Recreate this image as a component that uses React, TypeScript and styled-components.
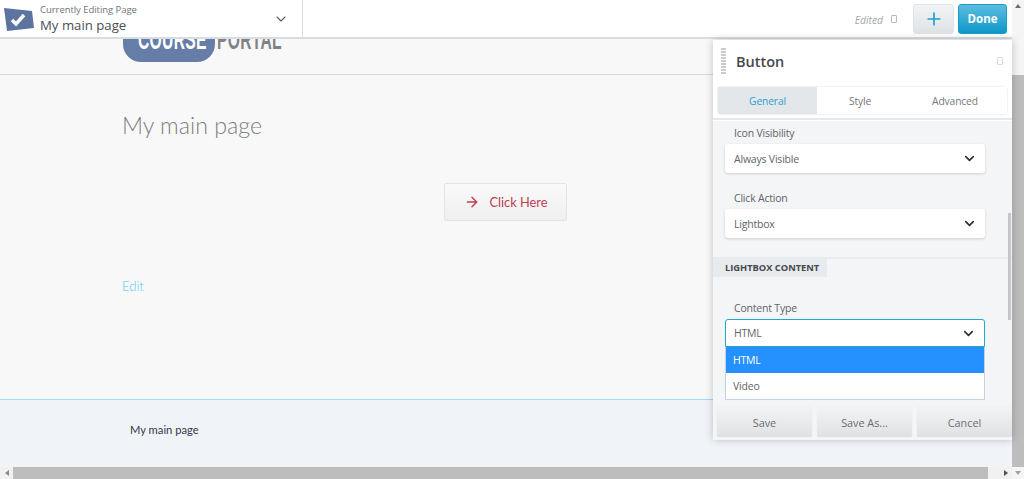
import styled, { createGlobalStyle } from 'styled-components'
import { ArrowRight, ChevronDown, Plus } from 'lucide-react'

const Global = createGlobalStyle`
  html, body {
    margin: 0;
    padding: 0;
    height: 100%;
    overflow: hidden;
    background: #f8f8f9;
  }
  * {
    box-sizing: border-box;
  }
`

const Page = styled.div`
  position: relative;
  display: flex;
  width: 1024px;
  height: 479px;
  overflow: hidden;
  font-family: 'Open Sans', 'Noto Sans', sans-serif;
`
const Main = styled.div`
  flex: 1;
  min-width: 0;
  display: flex;
  flex-direction: column;
`
const TopBar = styled.header`
  height: 39px;
  flex: none;
  display: flex;
  align-items: stretch;
  background: #fff;
  border-bottom: 2px solid #d8dde1;
`
const PagePicker = styled.div`
  width: 303px;
  display: flex;
  align-items: center;
  padding: 0 13px 0 4px;
  border-right: 1px solid #d8dde1;
`
const PageLogo = styled.svg`
  width: 31px;
  height: 27px;
  flex: none;
  margin: 1px 5px 0 0;
`
const PageText = styled.div`
  flex: 1;
  display: flex;
  flex-direction: column;
`
const PageCaption = styled.span`
  font-size: 9.5px;
  line-height: 13px;
  letter-spacing: -0.05px;
  color: #6d7479;
`
const PageName = styled.span`
  font-size: 13.2px;
  line-height: 19px;
  color: #4a4f54;
`
const Actions = styled.div`
  flex: 1;
  display: flex;
  align-items: center;
  justify-content: flex-end;
  padding: 0 5px 0 0;
`
const EditedText = styled.span`
  margin-top: 2px;
  font-size: 10.3px;
  font-style: italic;
  color: #a3a8ac;
`
const TinyBox = styled.span`
  display: block;
  width: 6px;
  height: 8px;
  border: 1px solid #b5babd;
  border-radius: 1px;
  margin: 0 16px 0 8px;
`
const AddButton = styled.button`
  width: 41px;
  height: 30px;
  padding: 0;
  display: flex;
  align-items: center;
  justify-content: center;
  margin-right: 4px;
  border: 1px solid #dfe3e6;
  border-radius: 3px;
  background: linear-gradient(#f2f4f5, #dfe3e6);
  color: #1f9fd0;
`
const DoneButton = styled.button`
  width: 49px;
  height: 30px;
  padding: 0;
  border: 1px solid #1a9ccb;
  border-radius: 3px;
  background: linear-gradient(#5cbde0, #0f97c9);
  color: #fff;
  font-family: 'Open Sans', sans-serif;
  font-size: 11.5px;
  font-weight: 700;
`
const LogoStrip = styled.div`
  height: 36px;
  flex: none;
  display: flex;
  padding-left: 123px;
  overflow: hidden;
  border-bottom: 1px solid #d5d7d9;
`
const LogoPill = styled.div`
  width: 92px;
  height: 62px;
  flex: none;
  margin-top: -39px;
  padding: 0 0 7px 15px;
  display: flex;
  align-items: flex-end;
  background: #667da8;
  border-radius: 0 0 18px 18px;
`
const LogoWord = styled.span<{ $tone: string }>`
  display: block;
  width: 66px;
  font-family: 'Liberation Sans', sans-serif;
  font-size: 27px;
  line-height: 30px;
  font-weight: 700;
  letter-spacing: 0.5px;
  color: ${(p) => p.$tone};
  white-space: nowrap;
  transform: scaleX(0.58);
  transform-origin: left center;
`
const PortalWord = styled.div`
  height: 62px;
  flex: none;
  margin: -39px 0 0 2px;
  padding-bottom: 7px;
  display: flex;
  align-items: flex-end;
`
const Content = styled.main`
  flex: 1;
  padding: 35px 0 0 122px;
  display: flex;
  flex-direction: column;
  background: #f8f8f9;
`
const Title = styled.h1`
  margin: 0;
  font-family: Lato, sans-serif;
  font-size: 23.2px;
  line-height: 30px;
  font-weight: 300;
  color: #7d7f82;
`
const ButtonRow = styled.div`
  display: flex;
  margin: 43px 0 0 322px;
`
const ClickButton = styled.button`
  width: 123px;
  height: 38px;
  padding: 0 0 0 1px;
  display: flex;
  align-items: center;
  justify-content: center;
  gap: 9px;
  border: 1px solid #e4e4e5;
  border-radius: 2px;
  background: linear-gradient(#fafafa, #efefef);
  color: #bd3d50;
  font-family: Lato, sans-serif;
  font-size: 12.8px;
`
const EditLink = styled.a`
  margin-top: 57px;
  font-family: Lato, sans-serif;
  font-size: 13px;
  line-height: 17px;
  font-weight: 300;
  color: #57c8f2;
`
const Footer = styled.footer`
  height: 68px;
  flex: none;
  padding: 22px 0 0 130px;
  background: #f0f3f7;
  border-top: 1px solid #9fdcf5;
  font-family: Lato, sans-serif;
  font-size: 11.2px;
  line-height: 16px;
  color: #33384a;
`
const HScroll = styled.div`
  height: 12px;
  flex: none;
  display: flex;
  align-items: center;
  background: #f1f1f1;
`
const HThumb = styled.div`
  height: 12px;
  flex: 1;
  background: #bdbdbd;
`
const ArrowSlot = styled.div`
  width: 13px;
  height: 12px;
  flex: none;
  display: flex;
  align-items: center;
  justify-content: center;
`
const TrackGap = styled.div`
  width: 11px;
  flex: none;
`
const Triangle = styled.span<{ $dir: 'up' | 'down' | 'left' | 'right' }>`
  display: block;
  width: 0;
  height: 0;
  border: 3px solid transparent;
  ${(p) => (p.$dir === 'up' ? 'border-top-width: 0; border-bottom: 4px solid #6e6e6e;' : '')}
  ${(p) => (p.$dir === 'down' ? 'border-bottom-width: 0; border-top: 4px solid #a0a0a0;' : '')}
  ${(p) => (p.$dir === 'left' ? 'border-left-width: 0; border-right: 4px solid #8a8a8a;' : '')}
  ${(p) => (p.$dir === 'right' ? 'border-right-width: 0; border-left: 4px solid #505050;' : '')}
`
const VScroll = styled.div`
  width: 12px;
  flex: none;
  display: flex;
  flex-direction: column;
  background: #f5f5f5;
`
const VThumb = styled.div`
  margin-top: 63px;
  flex: 1;
  background: #bdbdbd;
`
const VEnd = styled.div`
  height: 12px;
  flex: none;
  display: flex;
  align-items: center;
  justify-content: center;
`

/* floating settings panel */
const Panel = styled.aside`
  position: absolute;
  left: 713px;
  top: 40px;
  width: 299px;
  height: 400px;
  display: flex;
  flex-direction: column;
  background: #f3f5f7;
  box-shadow: 0 0 8px rgba(0, 0, 0, 0.22);
  border-radius: 3px 0 0 3px;
`
const PanelHead = styled.div`
  flex: none;
  height: 80px;
  padding: 0 5px;
  background: #fff;
  border-bottom: 2px solid #e6e9eb;
`
const PanelTitleRow = styled.div`
  height: 47px;
  display: flex;
  align-items: center;
`
const DragHandle = styled.span`
  width: 5px;
  height: 26px;
  margin: -5px 10px 0 3px;
  background: repeating-linear-gradient(#c9cdd0 0 2px, #fff 2px 3px);
`
const PanelTitle = styled.h2`
  flex: 1;
  margin: -5px 0 0;
  font-size: 14.5px;
  font-weight: 600;
  color: #44484c;
`
const PinBox = styled.span`
  display: block;
  width: 6px;
  height: 8px;
  border: 1px solid #d6d9db;
  border-radius: 1px;
  margin: -6px 4px 0 0;
`
const Tabs = styled.div`
  height: 27px;
  display: flex;
  border-radius: 3px;
  box-shadow: 0 0 2px rgba(0, 0, 0, 0.18);
`
const Tab = styled.div<{ $active?: boolean; $w: number }>`
  width: ${(p) => p.$w}px;
  display: flex;
  align-items: center;
  justify-content: center;
  font-size: 10.3px;
  letter-spacing: -0.15px;
  color: ${(p) => (p.$active ? '#2a9fd0' : '#75797d')};
  background: ${(p) => (p.$active ? '#e3e7ea' : '#fff')};
`
const PanelBody = styled.div`
  position: relative;
  flex: 1;
  min-height: 0;
  overflow: hidden;
  border-top: 1px solid #fff;
`
const Field = styled.div`
  padding: 0 27px 0 12px;
`
const FieldLabel = styled.div`
  height: 15px;
  margin-bottom: 3px;
  padding-left: 9px;
  font-size: 10.5px;
  line-height: 15px;
  letter-spacing: -0.2px;
  color: #5f6468;
`
const Select = styled.div<{ $open?: boolean }>`
  height: ${(p) => (p.$open ? 28 : 29)}px;
  padding: 0 8px 0 ${(p) => (p.$open ? 8 : 9)}px;
  display: flex;
  align-items: center;
  justify-content: space-between;
  background: #fff;
  border-radius: ${(p) => (p.$open ? '3px 3px 0 0' : '3px')};
  border: ${(p) => (p.$open ? '1px solid #25a5d2' : 'none')};
  box-shadow: ${(p) => (p.$open ? 'none' : '0 1px 3px rgba(0, 0, 0, 0.16)')};
  font-size: 10.5px;
  letter-spacing: -0.2px;
  color: #5f6468;
`
const FirstField = styled(Field)`
  padding-top: 5px;
`
const NextField = styled(Field)`
  padding-top: 18px;
`
const SectionHead = styled.div`
  margin-top: 19px;
  height: 20px;
  border-top: 2px solid #e8ebed;
`
const SectionTag = styled.div`
  width: 114px;
  height: 18px;
  padding-left: 12px;
  background: #e8ebee;
  font-size: 9.3px;
  line-height: 18px;
  font-weight: 700;
  color: #44484c;
`
const ContentField = styled(Field)`
  position: relative;
  padding-top: 24px;
`
const Options = styled.div`
  position: absolute;
  left: 12px;
  right: 27px;
  top: 70px;
  background: #fff;
  border: 1px solid #c3d2e4;
  border-top: none;
  z-index: 2;
`
const Option = styled.div<{ $active?: boolean }>`
  height: 26px;
  padding-left: 7px;
  display: flex;
  align-items: center;
  font-size: 10.5px;
  letter-spacing: -0.2px;
  background: ${(p) => (p.$active ? '#2590ff' : '#fff')};
  color: ${(p) => (p.$active ? '#fff' : '#5f6468')};
`
const BehindRow = styled.div`
  margin: 54px 27px 0 20px;
  height: 8px;
  background: #fff;
`
const BehindChip = styled.div`
  width: 20px;
  height: 8px;
  background: #e8ebee;
`
const InnerScroll = styled.div`
  position: absolute;
  right: 1px;
  top: 92px;
  width: 3px;
  height: 107px;
  background: #c3c7ca;
`
const PanelFoot = styled.div`
  flex: none;
  height: 40px;
  padding: 7px 0 3px 4px;
  display: flex;
  gap: 5px;
  background: #f3f5f7;
`
const FootButton = styled.button`
  flex: 1;
  padding: 0;
  border: none;
  border-radius: 2px;
  background: linear-gradient(#f2f3f4, #dfe1e3);
  box-shadow: 0 0 1px rgba(0, 0, 0, 0.14);
  font-family: 'Open Sans', sans-serif;
  font-size: 10.8px;
  font-weight: 500;
  color: #6a6f73;
`

const Chevron = () => <ChevronDown size={15} strokeWidth={2.6} color="#2b2e33" />

export default function App() {
  return (
    <Page>
      <Global />
      <Main>
        <TopBar>
          <PagePicker>
            <PageLogo viewBox="0 0 31 27">
              <path d="M0 2 L28 5 L30 22 L3 25 Z" fill="#5d74a1" />
              <path d="M8 14 L12 18 L20 9" fill="none" stroke="#fff" strokeWidth="3.4" />
            </PageLogo>
            <PageText>
              <PageCaption>Currently Editing Page</PageCaption>
              <PageName>My main page</PageName>
            </PageText>
            <ChevronDown size={16} strokeWidth={1.6} color="#5c6166" />
          </PagePicker>
          <Actions>
            <EditedText>Edited</EditedText>
            <TinyBox />
            <AddButton>
              <Plus size={20} strokeWidth={2} />
            </AddButton>
            <DoneButton>Done</DoneButton>
          </Actions>
        </TopBar>
        <LogoStrip>
          <LogoPill>
            <LogoWord $tone="#fff">COURSE</LogoWord>
          </LogoPill>
          <PortalWord>
            <LogoWord $tone="#808285">PORTAL</LogoWord>
          </PortalWord>
        </LogoStrip>
        <Content>
          <Title>My main page</Title>
          <ButtonRow>
            <ClickButton>
              <ArrowRight size={16} strokeWidth={2.2} />
              Click Here
            </ClickButton>
          </ButtonRow>
          <EditLink>Edit</EditLink>
        </Content>
        <Footer>My main page</Footer>
        <HScroll>
          <ArrowSlot>
            <Triangle $dir="left" />
          </ArrowSlot>
          <HThumb />
          <TrackGap />
          <ArrowSlot>
            <Triangle $dir="right" />
          </ArrowSlot>
        </HScroll>
      </Main>
      <VScroll>
        <VEnd>
          <Triangle $dir="up" />
        </VEnd>
        <VThumb />
        <VEnd>
          <Triangle $dir="down" />
        </VEnd>
      </VScroll>

      <Panel>
        <PanelHead>
          <PanelTitleRow>
            <DragHandle />
            <PanelTitle>Button</PanelTitle>
            <PinBox />
          </PanelTitleRow>
          <Tabs>
            <Tab $active $w={99}>General</Tab>
            <Tab $w={86}>Style</Tab>
            <Tab $w={104}>Advanced</Tab>
          </Tabs>
        </PanelHead>
        <PanelBody>
          <FirstField>
            <FieldLabel>Icon Visibility</FieldLabel>
            <Select>
              Always Visible
              <Chevron />
            </Select>
          </FirstField>
          <NextField>
            <FieldLabel>Click Action</FieldLabel>
            <Select>
              Lightbox
              <Chevron />
            </Select>
          </NextField>
          <SectionHead>
            <SectionTag>LIGHTBOX CONTENT</SectionTag>
          </SectionHead>
          <ContentField>
            <FieldLabel>Content Type</FieldLabel>
            <Select $open>
              HTML
              <Chevron />
            </Select>
            <Options>
              <Option $active>HTML</Option>
              <Option>Video</Option>
            </Options>
          </ContentField>
          <BehindRow>
            <BehindChip />
          </BehindRow>
          <InnerScroll />
        </PanelBody>
        <PanelFoot>
          <FootButton>Save</FootButton>
          <FootButton>Save As...</FootButton>
          <FootButton>Cancel</FootButton>
        </PanelFoot>
      </Panel>
    </Page>
  )
}
